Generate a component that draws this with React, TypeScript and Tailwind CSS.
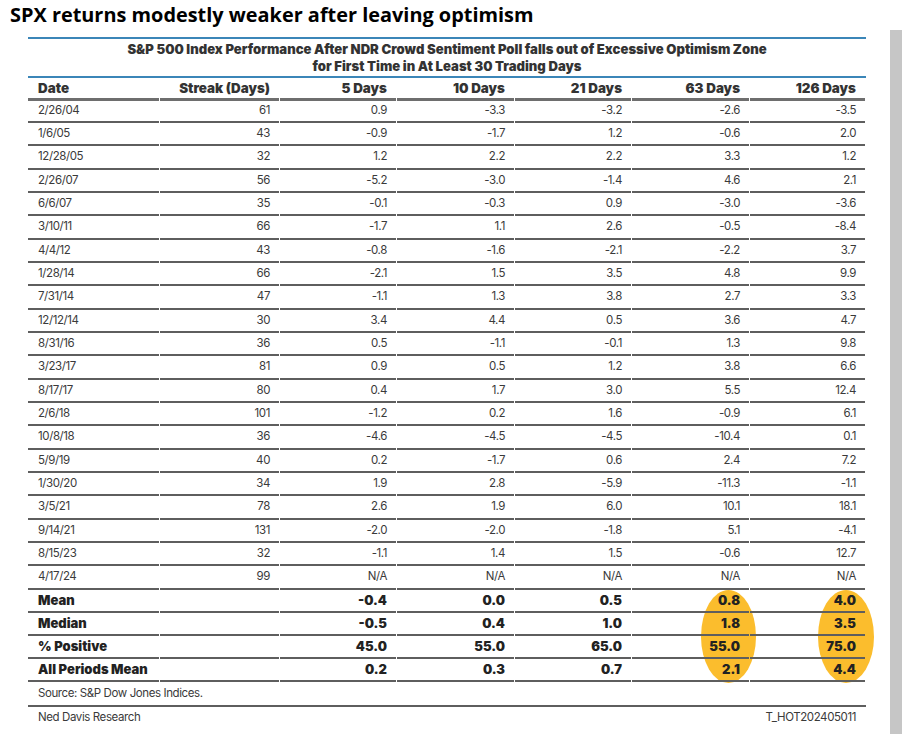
const rows = [
  ["2/26/04", "61", "0.9", "-3.3", "-3.2", "-2.6", "-3.5"],
  ["1/6/05", "43", "-0.9", "-1.7", "1.2", "-0.6", "2.0"],
  ["12/28/05", "32", "1.2", "2.2", "2.2", "3.3", "1.2"],
  ["2/26/07", "56", "-5.2", "-3.0", "-1.4", "4.6", "2.1"],
  ["6/6/07", "35", "-0.1", "-0.3", "0.9", "-3.0", "-3.6"],
  ["3/10/11", "66", "-1.7", "1.1", "2.6", "-0.5", "-8.4"],
  ["4/4/12", "43", "-0.8", "-1.6", "-2.1", "-2.2", "3.7"],
  ["1/28/14", "66", "-2.1", "1.5", "3.5", "4.8", "9.9"],
  ["7/31/14", "47", "-1.1", "1.3", "3.8", "2.7", "3.3"],
  ["12/12/14", "30", "3.4", "4.4", "0.5", "3.6", "4.7"],
  ["8/31/16", "36", "0.5", "-1.1", "-0.1", "1.3", "9.8"],
  ["3/23/17", "81", "0.9", "0.5", "1.2", "3.8", "6.6"],
  ["8/17/17", "80", "0.4", "1.7", "3.0", "5.5", "12.4"],
  ["2/6/18", "101", "-1.2", "0.2", "1.6", "-0.9", "6.1"],
  ["10/8/18", "36", "-4.6", "-4.5", "-4.5", "-10.4", "0.1"],
  ["5/9/19", "40", "0.2", "-1.7", "0.6", "2.4", "7.2"],
  ["1/30/20", "34", "1.9", "2.8", "-5.9", "-11.3", "-1.1"],
  ["3/5/21", "78", "2.6", "1.9", "6.0", "10.1", "18.1"],
  ["9/14/21", "131", "-2.0", "-2.0", "-1.8", "5.1", "-4.1"],
  ["8/15/23", "32", "-1.1", "1.4", "1.5", "-0.6", "12.7"],
  ["4/17/24", "99", "N/A", "N/A", "N/A", "N/A", "N/A"],
];

const summary = [
  ["Mean", "", "-0.4", "0.0", "0.5", "0.8", "4.0"],
  ["Median", "", "-0.5", "0.4", "1.0", "1.8", "3.5"],
  ["% Positive", "", "45.0", "55.0", "65.0", "55.0", "75.0"],
  ["All Periods Mean", "", "0.2", "0.3", "0.7", "2.1", "4.4"],
];

const headers = ["Date", "Streak (Days)", "5 Days", "10 Days", "21 Days", "63 Days", "126 Days"];

const grid = "grid grid-cols-[132px_120px_117px_118px_117px_118px_116px]";

function Row({ cells, bold }: { cells: string[]; bold?: boolean }) {
  return (
    <div className={bold ? `${grid} h-[23.2px]` : `${grid} h-[23.35px]`}>
      {cells.map((c, i) => (
        <div
          key={i}
          className={`flex items-center border-0 border-b-2 border-solid border-b-[#5e5e5e] mr-px ${
            i === 0 ? "justify-start pl-[10px]" : "justify-end pr-[9px]"
          } ${
            bold
              ? "font-black text-[#222] text-[13px] tracking-normal"
              : "text-[#3a3a3a] text-[11.5px]"
          }`}
        >
          {c}
        </div>
      ))}
    </div>
  );
}

export default function App() {
  return (
    <div className="flex flex-col w-[902px] h-[734px] bg-white font-['Inter',sans-serif] tracking-tight">
      <h1 className="h-[30px] pl-[10px] pt-[2px] text-[19.9px] font-bold text-black tracking-normal font-['Open_Sans',sans-serif] leading-[26px]">
        SPX returns modestly weaker after leaving optimism
      </h1>
      <div className="flex flex-1">
        <div className="ml-[28px] w-[838px] pt-[7px]">
          <div className="border-0 border-t-2 border-solid border-t-[#3b86b8] h-[39px] flex flex-col items-center justify-center text-[13.1px] font-black text-[#333] tracking-normal leading-[17px]">
            <div>S&amp;P 500 Index Performance After NDR Crowd Sentiment Poll falls out of Excessive Optimism Zone</div>
            <div>for First Time in At Least 30 Trading Days</div>
          </div>
          <div className={`${grid} h-[23.5px] border-0 border-t-2 border-solid border-t-[#3b86b8]`}>
            {headers.map((h, i) => (
              <div
                key={h}
                className={`flex items-center border-0 border-b-[3px] border-solid border-b-[#6e6e6e] mr-px text-[13.4px] font-black text-[#333] tracking-normal ${
                  i === 0 ? "justify-start pl-[10px]" : "justify-end pr-[9px]"
                }`}
              >
                {h}
              </div>
            ))}
          </div>
          {rows.map((r) => (
            <Row key={r[0]} cells={r} />
          ))}
          <div className="relative">
            <div className="absolute left-[673px] top-0 w-[55px] h-[93px] rounded-[50%] bg-[#fbbd2d]" />
            <div className="absolute left-[790px] top-0 w-[56px] h-[93px] rounded-[50%] bg-[#fbbd2d]" />
            <div className="relative">
              {summary.map((r) => (
                <Row key={r[0]} cells={r} bold />
              ))}
            </div>
          </div>
          <div className="h-[25px] flex items-center pl-[10px] border-0 border-b-2 border-solid border-b-[#5e5e5e] text-[11.5px] text-[#3a3a3a]">
            Source: S&amp;P Dow Jones Indices.
          </div>
          <div className="h-[21px] flex items-center justify-between px-[10px] text-[11.5px] text-[#3a3a3a]">
            <span>Ned Davis Research</span>
            <span>T_HOT202405011</span>
          </div>
        </div>
        <div className="ml-auto w-[12px] bg-[#c6c6c6]" />
      </div>
    </div>
  );
}
